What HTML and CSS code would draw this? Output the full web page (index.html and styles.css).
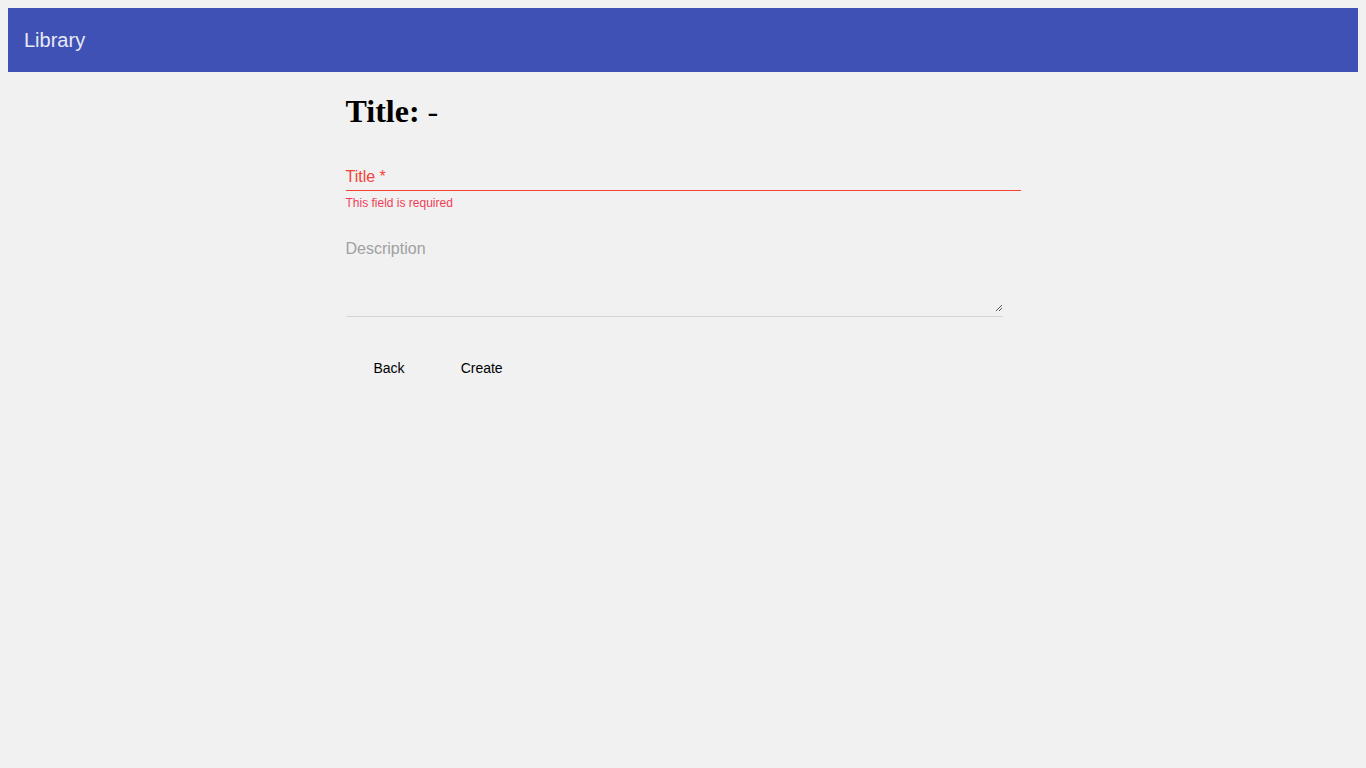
FILE: index.html
```html
<!DOCTYPE html>
<html>
<head>
<meta charset="utf-8">
<title>Library</title>
<link rel="stylesheet" href="styles.css">
</head>
<body>
<header class="toolbar"><span class="brand">Library</span></header>
<main class="content">
  <h1 class="page-title">Title: <span class="dash">-</span></h1>
  <form class="form">
    <div class="field field-error">
      <div class="field-input">Title *</div>
      <div class="field-line"></div>
      <div class="field-hint">This field is required</div>
    </div>
    <div class="field field-area">
      <div class="area-input">
        <span class="placeholder">Description</span>
        <svg class="grip" width="8" height="8" viewBox="0 0 8 8"><path d="M7 1 L1 7 M7 4 L4 7" stroke="#555" stroke-width="1" fill="none"/></svg>
      </div>
      <div class="area-line"></div>
    </div>
    <div class="actions">
      <button type="button" class="btn">Back</button>
      <button type="button" class="btn">Create</button>
    </div>
  </form>
</main>
</body>
</html>
```
FILE: styles.css
```css
html, body { background: #f1f1f1; }
body { margin: 8px; font-family: "Liberation Serif", serif; }
.toolbar {
  height: 64px;
  background: #3f51b5;
  display: flex;
  align-items: center;
  padding: 0 16px;
}
.brand {
  font-family: "Liberation Sans", Arial, sans-serif;
  font-size: 20px;
  color: #e8eaf6;
}
.content {
  width: 50%;
  margin: 0 auto;
}
.page-title {
  font-family: "Liberation Serif", serif;
  font-size: 32px;
  font-weight: bold;
  margin: 21px 0 0;
  color: #000;
}
.page-title .dash { font-weight: normal; }
.form { margin-top: 37px; }
.field-input {
  font-family: "Liberation Sans", Arial, sans-serif;
  font-size: 16px;
  color: #f44336;
  line-height: 20px;
  padding-bottom: 3px;
}
.field-line { height: 1px; background: #f44336; }
.field-hint {
  font-family: "Liberation Sans", Arial, sans-serif;
  font-size: 12px;
  color: #f23d56;
  margin-top: 5px;
  line-height: 14px;
}
.field-area { margin-top: 29px; width: 657px; }
.area-input {
  position: relative;
  height: 77px;
}
.placeholder {
  font-family: "Liberation Sans", Arial, sans-serif;
  font-size: 16px;
  color: #a0a0a0;
  line-height: 20px;
  display: block;
}
.grip { position: absolute; right: 0; bottom: 4px; }
.area-line { height: 1px; background: #d4d4d4; }
.actions { margin-top: 33px; display: flex; }
.btn {
  font-family: "Liberation Sans", Arial, sans-serif;
  font-size: 14px;
  color: #000;
  background: transparent;
  border: 0;
  padding: 0 28px;
  height: 36px;
  line-height: 36px;
  cursor: pointer;
}
```
